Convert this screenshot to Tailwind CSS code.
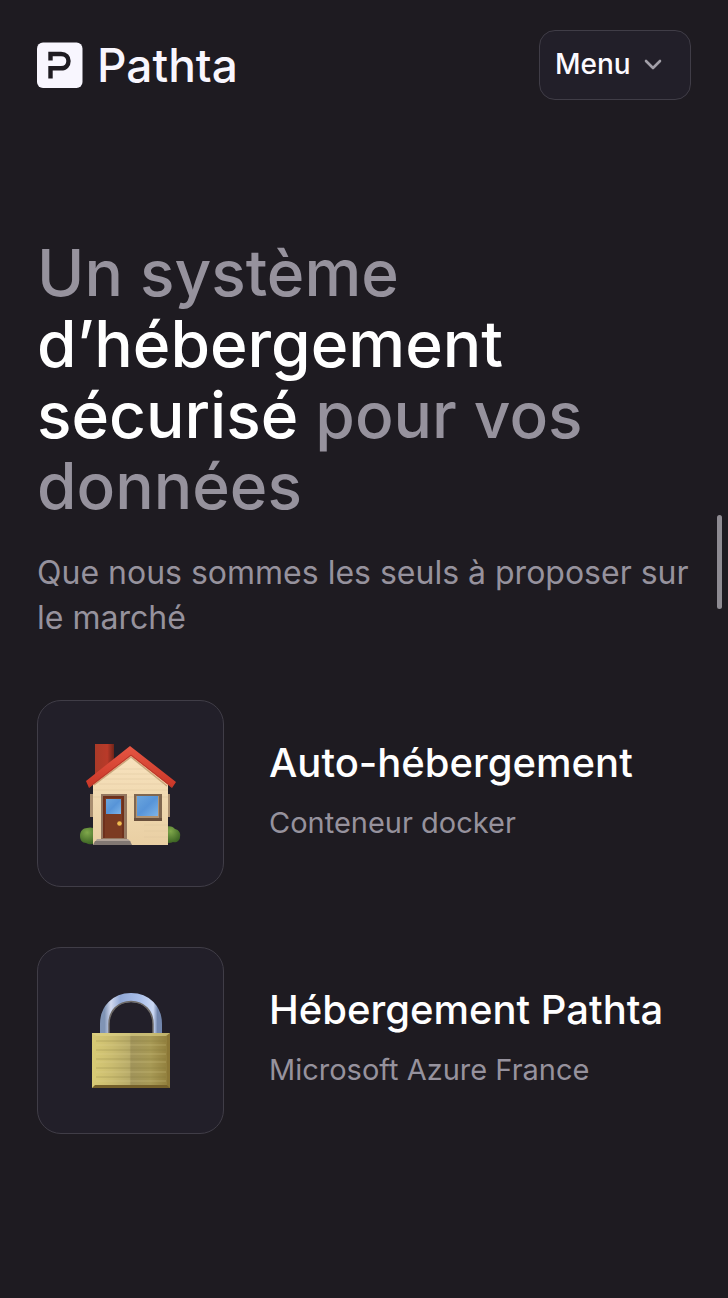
<!DOCTYPE html>
<html lang="fr">
  <head>
    <meta charset="utf-8" />
    <meta name="viewport" content="width=device-width, initial-scale=1" />
    <title>Pathta</title>
    <script src="https://cdn.jsdelivr.net/npm/@tailwindcss/browser@4"></script>
  </head>
  <body
    class="min-h-screen bg-[#1e1b21] px-[37px] pb-40 font-['Inter',sans-serif] text-[#fcfaff]"
  >
    <header class="flex items-center justify-between pt-[30px]">
      <a href="#" class="flex items-center gap-[14px]">
        <!-- Logo mark -->
        <svg class="h-[46px] w-[46px]" viewBox="0 0 46 46" fill="none" aria-hidden="true">
          <rect y="0.500" width="45.500" height="45.500" rx="6" fill="#f8f6fe" />
          <path
            d="M13.500 18.500V12H24C29 12 31.500 15 31.500 19S29 26.300 24 26.300H13.500V36.500"
            stroke="#1e1b21"
            stroke-width="4.400"
          />
        </svg>
        <span class="text-[46px] leading-[46px] font-medium text-[#f8f6fe]">Pathta</span>
      </a>
      <button
        type="button"
        class="flex h-[70px] w-[152px] items-center gap-3 rounded-2xl border border-[#403d47] bg-[#221f29] px-[15px] pb-[2px] text-[28px] font-medium"
      >
        Menu
        <svg class="h-5 w-5" viewBox="0 0 20 20" fill="none" aria-hidden="true">
          <path
            d="M3 7l7 7 7-7"
            stroke="#a29fa8"
            stroke-width="2.6"
            stroke-linecap="round"
            stroke-linejoin="round"
          />
        </svg>
      </button>
    </header>

    <main>
      <h1 class="mt-[137px] text-[64px] leading-[71px] font-medium text-[#96929d]">
        Un système <span class="text-white">d’hébergement</span>
        <span class="text-white">sécurisé</span> <span>pour vos</span>
        <span>données</span>
      </h1>
      <p class="mt-[29px] text-[32px] leading-[45px] text-[#96929d]">
        Que nous sommes les seuls à proposer sur le marché
      </p>

      <!-- Hosting options -->
      <ul class="mt-[60px] flex flex-col gap-[60px]">
        <li class="flex items-center gap-[45px]">
          <div
            class="flex h-[187px] w-[187px] shrink-0 items-center justify-center rounded-3xl border border-[#403d47] bg-[#221f29]"
          >
            <svg class="h-[104px] w-[104px]" viewBox="0 0 104 104" aria-hidden="true">
              <defs>
                <linearGradient id="roof" x1="0" y1="0" x2="0" y2="1">
                  <stop offset="0" stop-color="#e65643" />
                  <stop offset="1" stop-color="#c93627" />
                </linearGradient>
                <linearGradient id="chimney">
                  <stop offset="0" stop-color="#a93a28" />
                  <stop offset="0.65" stop-color="#b93a29" />
                  <stop offset="1" stop-color="#6f2419" />
                </linearGradient>
                <linearGradient id="wall" x1="0" y1="0" x2="0" y2="1">
                  <stop offset="0" stop-color="#f8e3bf" />
                  <stop offset="1" stop-color="#e9cfa3" />
                </linearGradient>
                <linearGradient id="glass" x1="0" y1="0" x2="1" y2="1">
                  <stop offset="0" stop-color="#6ba6de" />
                  <stop offset="0.5" stop-color="#5794d8" />
                  <stop offset="1" stop-color="#7db4e8" />
                </linearGradient>
                <radialGradient id="bush" cx="0.4" cy="0.3" r="0.7">
                  <stop offset="0" stop-color="#80a84b" />
                  <stop offset="1" stop-color="#3c6423" />
                </radialGradient>
              </defs>
              <path
                d="M1 94c0-5 3-8 7-8 5-2 11 1 11 7v6c-3 4-9 4-12 2-4 0-6-3-6-7z"
                fill="url(#bush)"
              />
              <path
                d="M86 86c3-3 8-2 10 1 4 1 6 4 5 8 0 4-4 6-7 5-3 2-8 1-9-2z"
                fill="url(#bush)"
              />
              <path d="M11 52h4v23h-4zM89 52h2v23h-2z" fill="#a98e70" />
              <path d="M16 2h19v20L16 36z" fill="url(#chimney)" />
              <path d="M14 41L52 10l37 31v62H14z" fill="url(#wall)" />
              <path
                d="M36 27h31M31 32h42M25 37h54M20 42h64M14 48h75M14 55h75M65 83h24M65 89h24M65 95h24"
                stroke="#dfc79c"
                stroke-width="0.5"
              />
              <path d="M15 43L52 15l36 29" fill="none" stroke="#c9a77c" stroke-width="1.5" />
              <path d="M51 4L7 39l3 7 42-32 41 32 4-6z" fill="url(#roof)" />
              <path d="M10 45l42-32 41 32" fill="none" stroke="#b63a2a" stroke-width="1" />
              <!-- Door -->
              <path d="M22 52h26v46H22z" fill="#947760" />
              <path d="M24 54h21v42H24z" fill="#6e301c" />
              <path d="M26 56h17v40H26z" fill="#7c3b22" />
              <path d="M27 57h15v15H27z" fill="url(#glass)" />
              <circle cx="40.500" cy="81.500" r="2.300" fill="#f0bc50" />
              <path d="M18 97h31l3 3H16z" fill="#b0a298" />
              <path d="M16 99h35l2 4H14z" fill="#827873" />
              <!-- Window -->
              <path d="M55 52h28v27H55z" fill="#806750" />
              <path d="M55 76h28v3H55z" fill="#6a503c" />
              <path d="M57 54h23v22H57z" fill="#b19270" />
              <path d="M58 54h21v20H58z" fill="url(#glass)" />
            </svg>
          </div>
          <div class="flex flex-col gap-[19px] pb-[6px] whitespace-nowrap">
            <h2 class="text-[40px] leading-[46px] font-medium text-white">
              Auto-hébergement
            </h2>
            <p class="text-[29px] leading-[36px] text-[#96929d]">Conteneur docker</p>
          </div>
        </li>
        <li class="flex items-center gap-[45px]">
          <div
            class="flex h-[187px] w-[187px] shrink-0 items-center justify-center rounded-3xl border border-[#403d47] bg-[#221f29]"
          >
            <svg class="h-[104px] w-[104px]" viewBox="0 0 104 104" aria-hidden="true">
              <defs>
                <linearGradient id="steel">
                  <stop offset="0" stop-color="#8094b5" />
                  <stop offset="0.12" stop-color="#d2d9ef" />
                  <stop offset="0.3" stop-color="#91a8d6" />
                  <stop offset="0.65" stop-color="#a8bde8" />
                  <stop offset="0.92" stop-color="#cbd9f5" />
                  <stop offset="1" stop-color="#7286ad" />
                </linearGradient>
                <linearGradient id="brass">
                  <stop offset="0" stop-color="#d8ca75" />
                  <stop offset="0.25" stop-color="#cabc70" />
                  <stop offset="0.48" stop-color="#b8ab69" />
                  <stop offset="0.5" stop-color="#a0935a" />
                  <stop offset="0.75" stop-color="#a79955" />
                  <stop offset="1" stop-color="#8f7c3a" />
                </linearGradient>
              </defs>
              <g transform="translate(0 2)">
                <path
                  d="M25.500 45V33C25.500 18 36 6.500 52 6.500S78.500 18 78.500 33v12"
                  fill="none"
                  stroke="url(#steel)"
                  stroke-width="9"
                />
                <path
                  d="M30 42V33C30 20 39 10.500 52 10.500S74 20 74 33v9"
                  fill="none"
                  stroke="#6f6b68"
                  stroke-width="1.500"
                />
                <path d="M13 42h78v55H13z" fill="url(#brass)" />
                <path d="M13 42h78l-4 3H17z" fill="#e0d488" opacity="0.6" />
                <path
                  d="M17 50h70M17 59h70M17 68h70M17 77h70M17 86h70"
                  stroke="#84783d"
                  stroke-width="0.8"
                  opacity="0.4"
                />
                <path
                  d="M17 54h70M17 63h70M17 71h70M17 81h70M17 90h70"
                  stroke="#e5d99a"
                  stroke-width="1"
                  opacity="0.3"
                />
                <path d="M88 45l3-3v55l-3-3z" fill="#8b7736" />
                <path d="M13 97l3-3h72l3 3z" fill="#75602a" />
              </g>
            </svg>
          </div>
          <div class="flex flex-col gap-[19px] pb-[6px] whitespace-nowrap">
            <h2 class="text-[40px] leading-[46px] font-medium text-white">
              Hébergement Pathta
            </h2>
            <p class="text-[29px] leading-[36px] text-[#96929d]">
              Microsoft Azure France
            </p>
          </div>
        </li>
      </ul>
    </main>

    <!-- Scroll indicator -->
    <div class="fixed top-[515px] right-[6px] h-[94px] w-[5px] rounded-full bg-[#8e8b92]"></div>
  </body>
</html>
